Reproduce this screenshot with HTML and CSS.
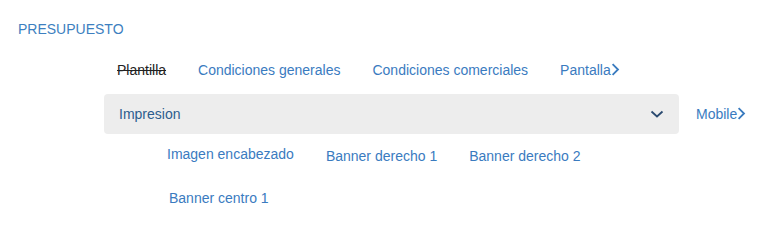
FILE: index.html
```html
<!DOCTYPE html>
<html lang="es">
<head>
<meta charset="utf-8">
<title>Presupuesto</title>
<link rel="stylesheet" href="styles.css">
</head>
<body>
<div class="page">
  <div class="title">PRESUPUESTO</div>
  <nav class="tabs">
    <span class="tab tab-disabled">Plantilla</span>
    <a class="tab" href="#">Condiciones generales</a>
    <a class="tab" href="#">Condiciones comerciales</a>
    <a class="tab" href="#">Pantalla<svg class="chev-right" width="9" height="13" viewBox="0 0 9 13"><path d="M1.6 1.2 L7 6.5 L1.6 11.8" fill="none" stroke="currentColor" stroke-width="1.8"/></svg></a>
  </nav>
  <div class="row-select">
    <div class="select">
      <span class="select-label">Impresion</span>
      <svg class="chev-down" width="14" height="8" viewBox="0 0 14 8"><path d="M1.5 1.5 L7 6.5 L12.5 1.5" fill="none" stroke="currentColor" stroke-width="1.8"/></svg>
    </div>
    <a class="tab mobile" href="#">Mobile<svg class="chev-right" width="9" height="13" viewBox="0 0 9 13"><path d="M1.6 1.2 L7 6.5 L1.6 11.8" fill="none" stroke="currentColor" stroke-width="1.8"/></svg></a>
  </div>
  <div class="subtabs">
    <a class="tab sub-first" href="#">Imagen encabezado</a>
    <a class="tab sub-low" href="#">Banner derecho 1</a>
    <a class="tab sub-low" href="#">Banner derecho 2</a>
  </div>
  <div class="subtabs2">
    <a class="tab" href="#">Banner centro 1</a>
  </div>
</div>
</body>
</html>
```

FILE: styles.css
```css
html, body {
  margin: 0;
  padding: 0;
  background: #ffffff;
}
body {
  font-family: "Liberation Sans", Arial, sans-serif;
  font-size: 14px;
  line-height: 16px;
  color: #3a7bbf;
}
.page {
  width: 760px;
  height: 220px;
  overflow: hidden;
}
.title {
  padding: 21px 0 0 18px;
  color: #3d7fc0;
}
.tab {
  color: #3a7bbf;
  text-decoration: none;
  white-space: nowrap;
  display: inline-flex;
  align-items: center;
}
.tab-disabled {
  color: #222222;
  text-decoration: line-through;
}
.tabs {
  display: flex;
  margin-top: 25px;
  padding-left: 117px;
  gap: 32px;
}
.chev-right {
  flex: none;
  margin-left: 0;
  margin-top: -1px;
}
.row-select {
  display: flex;
  align-items: center;
  margin-top: 16px;
  padding-left: 104px;
}
.select {
  width: 575px;
  height: 40px;
  box-sizing: border-box;
  background: #ededed;
  border-radius: 4px;
  display: flex;
  align-items: center;
  justify-content: space-between;
  padding: 0 15px 0 15px;
  color: #2c5d8e;
}
.chev-down {
  color: #2a4a70;
}
.mobile {
  margin-left: 17px;
}
.subtabs {
  display: flex;
  align-items: flex-start;
  margin-top: 12px;
  padding-left: 167px;
  gap: 32px;
}
.sub-low {
  margin-top: 2px;
}
.subtabs2 {
  margin-top: 26px;
  padding-left: 169px;
}
```
